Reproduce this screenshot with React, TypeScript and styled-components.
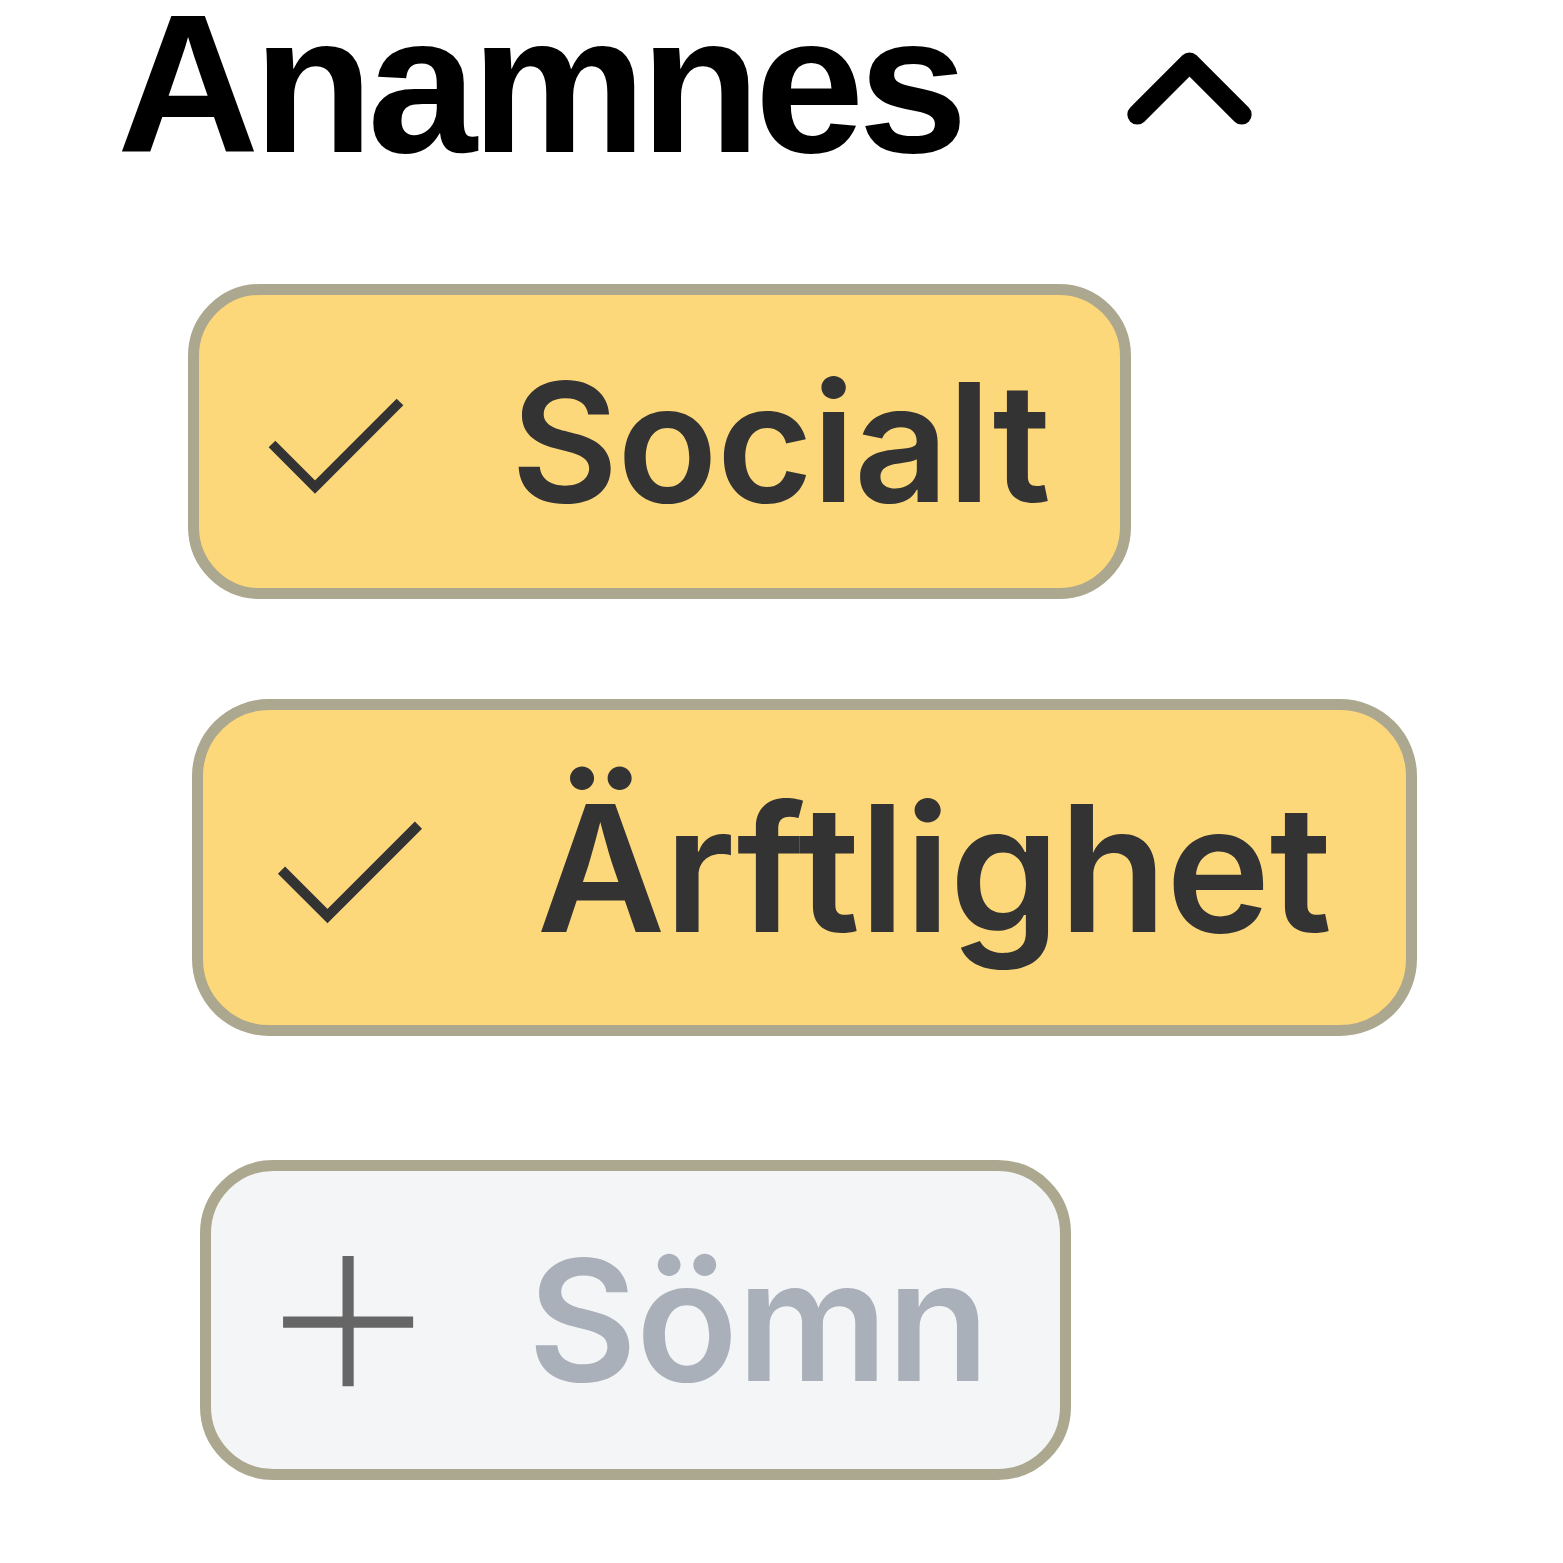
import React from "react";
import styled, { createGlobalStyle } from "styled-components";

const GlobalStyle = createGlobalStyle`
  html, body { margin: 0; padding: 0; background: #ffffff; }
  body { font-family: Inter, "Noto Sans", sans-serif; }
`;

const Page = styled.div`
  padding: 4px 0 0 117px;
  display: flex;
  flex-direction: column;
  align-items: flex-start;
`;

const HeaderRow = styled.div`
  display: flex;
  align-items: center;
  gap: 164px;
`;

const Title = styled.h2`
  margin: 0;
  font-family: "Liberation Sans", Arial, sans-serif;
  font-weight: 700;
  font-size: 197px;
  line-height: 160px;
  letter-spacing: -6px;
  color: #000;
`;

const ChevronSvg = styled.svg`
  width: 127px;
  height: 75px;
  margin-top: 8px;
  display: block;
  flex: none;
`;

const ChipList = styled.div`
  display: flex;
  flex-direction: column;
  align-items: flex-start;
`;

type ChipProps = { $s: number; $on: boolean; $mt: number; $ml: number };

const Chip = styled.div<ChipProps>`
  box-sizing: border-box;
  display: inline-flex;
  align-items: center;
  margin-top: ${(p) => p.$mt}px;
  margin-left: ${(p) => p.$ml}px;
  height: ${(p) => 315 * p.$s}px;
  padding: 0 ${(p) => 70 * p.$s}px 0 ${(p) => 66 * p.$s}px;
  gap: ${(p) => 106 * p.$s}px;
  border: 11px solid #aca78f;
  border-radius: ${(p) => 72 * p.$s}px;
  background: ${(p) => (p.$on ? "#fdd87a" : "#f4f5f7")};
`;

const ChipLabel = styled.span<{ $s: number; $on: boolean }>`
  font-family: Inter, "Noto Sans", sans-serif;
  font-weight: 600;
  font-size: ${(p) => 165 * p.$s}px;
  line-height: normal;
  letter-spacing: -1px;
  color: ${(p) => (p.$on ? "#333333" : "#a9b0ba")};
  white-space: nowrap;
`;

const IconSvg = styled.svg<{ $s: number }>`
  display: block;
  flex: none;
  width: ${(p) => 140 * p.$s}px;
  height: ${(p) => 140 * p.$s}px;
`;

function CheckIcon({ s }: { s: number }) {
  return (
    <IconSvg $s={s} viewBox="0 0 140 140" fill="none">
      <path
        d="M7 72 L50 115 L135 30"
        stroke="#333333"
        strokeWidth={9.5}
        strokeLinecap="butt"
        strokeLinejoin="miter"
      />
    </IconSvg>
  );
}

function PlusIcon({ s }: { s: number }) {
  return (
    <IconSvg $s={s} viewBox="0 0 140 140" fill="none">
      <path
        d="M5 72 H133 M69 7 V135"
        stroke="#666666"
        strokeWidth={11}
        strokeLinecap="butt"
      />
    </IconSvg>
  );
}

type Item = { label: string; on: boolean; s: number; mt: number; ml: number };

const items: Item[] = [
  { label: "Socialt", on: true, s: 1, mt: 120, ml: 71 },
  { label: "Ärftlighet", on: true, s: 1.07, mt: 100, ml: 75 },
  { label: "Sömn", on: false, s: 1.016, mt: 124, ml: 83 },
];

export default function App() {
  return (
    <>
      <GlobalStyle />
      <Page>
        <HeaderRow>
          <Title>Anamnes</Title>
          <ChevronSvg viewBox="4.7 7.7 14.6 8.6" fill="none">
            <path
              d="M6 15l6-6 6 6"
              stroke="#000"
              strokeWidth={2.3}
              strokeLinecap="round"
              strokeLinejoin="round"
            />
          </ChevronSvg>
        </HeaderRow>
        <ChipList>
          {items.map((it) => (
            <Chip key={it.label} $s={it.s} $on={it.on} $mt={it.mt} $ml={it.ml}>
              {it.on ? <CheckIcon s={it.s} /> : <PlusIcon s={it.s} />}
              <ChipLabel $s={it.s} $on={it.on}>
                {it.label}
              </ChipLabel>
            </Chip>
          ))}
        </ChipList>
      </Page>
    </>
  );
}
